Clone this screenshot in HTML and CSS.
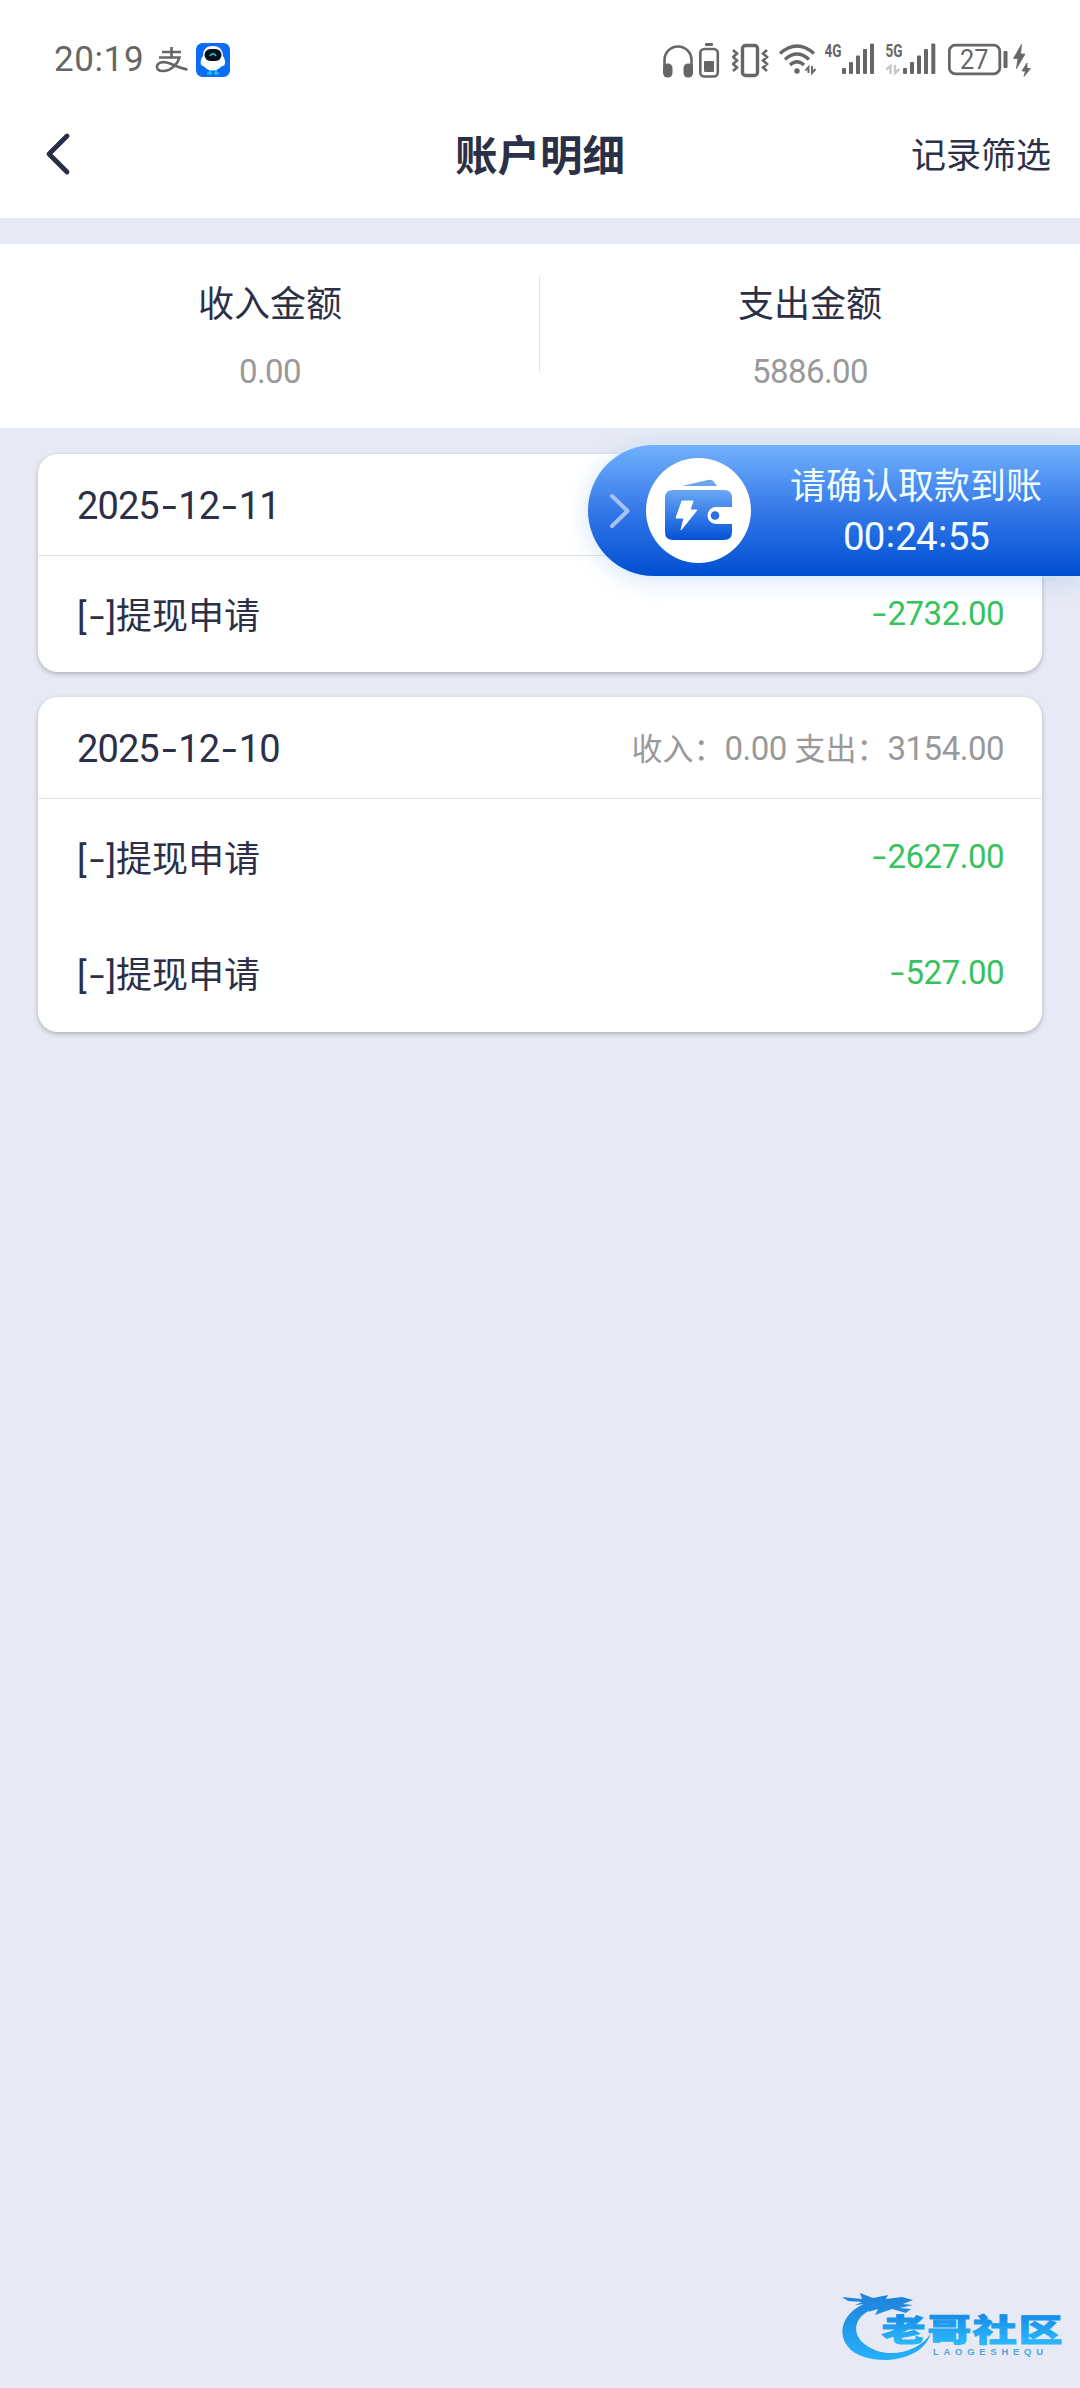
FILE: index.html
```html
<!DOCTYPE html>
<html lang="zh-CN">
<head>
<meta charset="utf-8">
<title>账户明细</title>
<link rel="stylesheet" href="styles.css">
</head>
<body>
<div class="screen">
  <div class="statusbar">
    <div class="status-left">
      <span class="clock">20:19</span>
      <svg class="pay" width="34" height="28" viewBox="0 0 34 28" fill="none" stroke="#666" stroke-width="2.6">
        <path d="M7 6H26M16.500 1V11.500M4 11.500H24.500C23 17 17 24.500 9 25C3 25.300 1.300 22.500 2.200 19.500C3.500 16 9 15 15 17.500C21 20 26 22.500 32.500 23.500"/>
      </svg>
      <svg class="app" width="34" height="34" viewBox="0 0 34 34">
        <rect width="34" height="34" rx="6.500" fill="#0b6cf6"/>
        <path d="M17 3C25 3 27 9 27 13C29 16 30 20 28 23C26 22 26 24 22 26C19 28 14 28 11 26C8 24 7 22 6 23C4 20 4 17 7 13C7 8 9 3 17 3Z" fill="#fff"/>
        <rect x="8.500" y="6" width="17" height="12" rx="6" fill="#071018"/>
        <path d="M14 13C15 10 19 10 20 13" fill="none" stroke="#35c6e8" stroke-width="1.500"/>
        <path d="M14 27V30M20 27V30M11 30.500H16M18 30.500H23" stroke="#25c3f4" stroke-width="2"/>
      </svg>
    </div>
    <div class="status-right">
      <svg width="36" height="40" viewBox="663 40 36 40">
        <path d="M664.500 67V60A13.500 13.500 0 0 1 691.500 60V67" fill="none" stroke="#666" stroke-width="2.600"/>
        <rect x="663" y="63.500" width="9.500" height="14" rx="4.500" fill="#666"/><rect x="683.500" y="63.500" width="9.500" height="14" rx="4.500" fill="#666"/>
      </svg>
      <svg width="33" height="40" viewBox="699 40 33 40">
        <rect x="700.300" y="49" width="17.500" height="27.500" rx="4" fill="none" stroke="#666" stroke-width="2.600"/>
        <rect x="705" y="43" width="8" height="3" rx="1" fill="#666"/><rect x="704" y="61" width="10" height="11" rx="1" fill="#666"/>
      </svg>
      <svg width="47" height="40" viewBox="732 40 47 40" fill="none" stroke="#666">
        <rect x="742.500" y="45.500" width="15" height="30" rx="3" stroke-width="3.400"/>
        <path d="M733 50L737 53.500L733 57L737 60.500L733 64L737 67.500L733 71M767 50L763 53.500L767 57L763 60.500L767 64L763 67.500L767 71" stroke-width="2.600"/>
      </svg>
      <svg width="46" height="40" viewBox="779 40 46 40" fill="none" stroke="#666" stroke-width="3.200">
        <path d="M780 53.500Q797 38.500 814 53.500M785 59.500Q797 48.500 809 59.500M790 65Q797 58.500 804 65"/>
        <circle cx="797" cy="71" r="2.700" fill="#666" stroke="none"/>
        <path d="M808.500 73V67L805.500 70.500M812 66V73L815.500 69" stroke-width="1.900"/>
      </svg>
      <svg class="signal" width="61" height="40" viewBox="825 40 61 40">
        <text x="824.500" y="57" textLength="17" lengthAdjust="spacingAndGlyphs">4G</text>
        <g><rect x="842" y="68" width="4" height="6" rx="1"/><rect x="849" y="62" width="4" height="12" rx="1"/><rect x="856" y="55.500" width="4" height="18.500" rx="1"/><rect x="863" y="49" width="4" height="25" rx="1"/><rect x="870" y="43.500" width="4" height="30.500" rx="1"/></g>
      </svg>
      <svg class="signal" width="62" height="40" viewBox="886 40 62 40">
        <text x="885.500" y="57" textLength="17" lengthAdjust="spacingAndGlyphs">5G</text>
        <path d="M890.500 74V66L886.500 69.500M895 65V73L899.500 69" fill="none" stroke="#c8c8c8" stroke-width="2.400"/>
        <g><rect x="903" y="68" width="4" height="6" rx="1"/><rect x="910" y="62" width="4" height="12" rx="1"/><rect x="917" y="55.500" width="4" height="18.500" rx="1"/><rect x="924" y="49" width="4" height="25" rx="1"/><rect x="931.300" y="43.500" width="4" height="30.500" rx="1"/></g>
      </svg>
      <svg class="battery" width="84" height="40" viewBox="948 40 84 40">
        <rect x="949.300" y="45.200" width="50.500" height="28.600" rx="6" fill="none" stroke="#666" stroke-width="2.800"/>
        <text x="960" y="69.300" textLength="28.500" lengthAdjust="spacingAndGlyphs">27</text>
        <rect x="1003.500" y="51" width="4" height="17" rx="1" fill="#666"/>
        <path d="M1021.500 44.500L1013.500 58.500H1018L1016.500 68.500L1025 54H1020.500ZM1027 63L1022 71H1025.500L1024 76.500L1030.500 68.500H1027Z" fill="#666" stroke="#666" stroke-width=".8"/>
      </svg>
    </div>
  </div>

  <header class="navbar">
    <svg class="back" width="28" height="44" viewBox="0 0 28 44"><path d="M24 4L6 22L24 40" fill="none" stroke="#292e45" stroke-width="4.800" stroke-linecap="round" stroke-linejoin="round"/></svg>
    <h1>账户明细</h1>
    <span class="filter">记录筛选</span>
  </header>

  <section class="summary">
    <div class="total"><span class="label">收入金额</span><span class="value">0.00</span></div>
    <div class="total"><span class="label">支出金额</span><span class="value">5886.00</span></div>
  </section>

  <main class="list">
    <section class="card">
      <div class="card-head"><span class="date">2025<i>-</i>12<i>-</i>11</span></div>
      <div class="row"><span class="name">[<i>-</i>]提现申请</span><span class="amount"><i>-</i>2732.00</span></div>
    </section>
    <section class="card">
      <div class="card-head"><span class="date">2025<i>-</i>12<i>-</i>10</span><span class="daily">收入：<b>0.00</b> 支出：<b>3154.00</b></span></div>
      <div class="row"><span class="name">[<i>-</i>]提现申请</span><span class="amount"><i>-</i>2627.00</span></div>
      <div class="row"><span class="name">[<i>-</i>]提现申请</span><span class="amount"><i>-</i>527.00</span></div>
    </section>
  </main>

  <div class="notice">
    <svg class="more" width="24" height="38" viewBox="0 0 24 38"><path d="M4 4L19.500 19L4 34" fill="none" stroke="#a9c0f4" stroke-width="4" stroke-linecap="round" stroke-linejoin="round"/></svg>
    <svg class="wallet" width="105" height="105" viewBox="0 0 105 105">
      <defs><linearGradient id="wg" x1="0" y1="0" x2="0" y2="1"><stop offset="0" stop-color="#69a7f5"/><stop offset="1" stop-color="#0452d5"/></linearGradient></defs>
      <circle cx="52.500" cy="52.500" r="52.500" fill="#fff"/>
      <path d="M36 28L62 22Q66 21 68 24L71 28Z" fill="#6ba4ef"/>
      <path d="M27 32H78Q86 32 86 40V49H70A8.500 8.500 0 0 0 70 66H86V74Q86 82 78 82H27Q19 82 19 74V40Q19 32 27 32Z" fill="url(#wg)"/>
      <circle cx="69" cy="57.500" r="4.300" fill="#2b6ee2"/>
      <path d="M36 43H47L44 52H51L35 72L38 60H30Z" fill="#fff" stroke="#fff" stroke-linejoin="round"/>
    </svg>
    <div class="notice-text"><span>请确认取款到账</span><span class="timer">00<em>:</em>24<em>:</em>55</span></div>
  </div>

  <svg class="watermark" width="226" height="76" viewBox="840 2290 226 76">
    <defs>
      <linearGradient id="dg" gradientUnits="userSpaceOnUse" x1="0" y1="2294" x2="0" y2="2360"><stop offset="0" stop-color="#1f82da"/><stop offset="1" stop-color="#25b1fb"/></linearGradient>
      <linearGradient id="tg" gradientUnits="userSpaceOnUse" x1="0" y1="-27" x2="0" y2="2"><stop offset="0" stop-color="#158be6"/><stop offset="1" stop-color="#2bb7fb"/></linearGradient>
    </defs>
    <path d="M872 2301C834 2312 834 2348 864 2357C890 2365 924 2357 931 2333C921 2350 894 2358 875 2350C849 2340 849 2315 880 2306Z" fill="url(#dg)"/>
    <path d="M842 2297L862 2299L860 2293L873 2298L888 2295L886 2299L902 2297L913 2300L903 2304L913 2305L900 2308L911 2309L906 2313L892 2309L875 2315L878 2309L868 2312L871 2306L861 2309L866 2304L855 2305L862 2302L848 2301Z" fill="url(#dg)"/>
    <text class="brand" transform="translate(881.500 2341) scale(1.420 1)" textLength="127.500" fill="url(#tg)" stroke="url(#tg)" stroke-width=".9">老哥社区</text>
    <text class="brand-en" x="933" y="2354.500" textLength="110">LAOGESHEQU</text>
  </svg>
</div>
</body>
</html>
```
FILE: styles.css
```css
* { box-sizing: border-box; }
body { margin: 0; background: #e7eaf4; }
i, em, b { font-style: normal; font-weight: inherit; }
svg { display: block; flex: none; }

.screen {
  position: relative;
  width: 1080px;
  height: 2388px;
  overflow: hidden;
  background: #e7eaf4;
  color: #2c3047;
  font-family: Roboto, "Noto Sans CJK SC", sans-serif;
  font-size: 36px;
}

.statusbar {
  display: flex;
  justify-content: space-between;
  height: 100px;
  padding: 40px 48px 0 54px;
  background: #fff;
  color: #666;
}
.status-left { display: flex; height: 40px; align-items: center; }
.clock { font-size: 35px; line-height: 40px; letter-spacing: .6px; width: 101px; }
.pay { margin-right: 7px; }
.status-right { display: flex; height: 40px; }
.signal { fill: #666; }
.signal text { font: 700 18px Roboto, sans-serif; }
.battery text { font: 400 27px Roboto, sans-serif; fill: #666; }

.navbar {
  display: grid;
  grid-template-columns: 1fr auto 1fr;
  align-items: center;
  height: 118px;
  padding: 0 29px 10px;
  background: #fff;
}
.back { margin-left: 14px; }
.navbar h1 { margin: 5px 0 0; font-size: 42.500px; line-height: 60px; font-weight: 700; }
.filter { justify-self: end; margin-top: 5px; font-size: 35px; line-height: 50px; }

.summary {
  display: grid;
  grid-template-columns: 1fr 1fr;
  height: 184px;
  margin-top: 26px;
  background: #fff;
}
.total { display: flex; flex-direction: column; align-items: center; padding-top: 35px; }
.total:first-child {
  background: linear-gradient(#dfe2e6, #dfe2e6) 100% 32px / 1px 96px no-repeat;
}
.label { line-height: 52px; }
.value { margin-top: 21px; font-size: 33px; line-height: 40px; letter-spacing: -.6px; color: #999; }

.list { display: flex; flex-direction: column; gap: 25px; padding: 26px 38px; }
.card {
  background: #fff;
  border-radius: 20px;
  box-shadow: 0 2px 5px rgba(0, 0, 0, .24);
}
.card-head, .row {
  display: flex;
  align-items: center;
  justify-content: space-between;
  padding: 0 38px 0 39px;
}
.card-head { height: 102px; padding-top: 2px; border-bottom: 1px solid #e2e5e9; }
.row { height: 116px; padding-bottom: 2px; }
.row + .row { height: 117px; }
.date { font-size: 38px; letter-spacing: -.9px; }
.date i { display: inline-block; width: 19.500px; text-align: center; transform: scaleX(1.400); }
.name { padding-bottom: 1px; }
.name i { display: inline-block; width: 20px; text-align: center; transform: scaleX(1.500); }
.amount { font-size: 33px; letter-spacing: -.5px; color: #36c25c; }
.amount i { display: inline-block; width: 18px; text-align: center; transform: scaleX(1.500); }
.daily { padding-bottom: 4px; font-size: 31px; color: #999; }
.daily b { font-size: 33px; letter-spacing: -.5px; }

/* Floating withdrawal reminder docked to the right edge */
.notice {
  position: absolute;
  top: 445px;
  right: 0;
  display: flex;
  align-items: center;
  width: 492px;
  height: 131px;
  border-radius: 66px 0 0 66px;
  background: linear-gradient(#72b1fd, #3478e8 50%, #004fd2);
  box-shadow: 0 0 3px #d9efff, 0 4px 24px rgba(60, 130, 230, .22);
  color: #f1fdff;
}
.more { margin-left: 20px; }
.wallet { margin-left: 14px; }
.notice-text { display: flex; flex-direction: column; align-items: center; margin: 2px 0 0 39px; line-height: 49px; }
.timer { font-size: 38.500px; letter-spacing: -1px; line-height: 49px; }
.timer em { display: inline-block; width: 11px; text-align: center; transform: translateY(-3px); }

.watermark { position: absolute; left: 840px; top: 2290px; }
.brand { font: 900 31px "Noto Sans CJK SC", sans-serif; }
.brand-en { font: 700 9.500px "Liberation Sans", sans-serif; fill: #4fa5dc; }
```
